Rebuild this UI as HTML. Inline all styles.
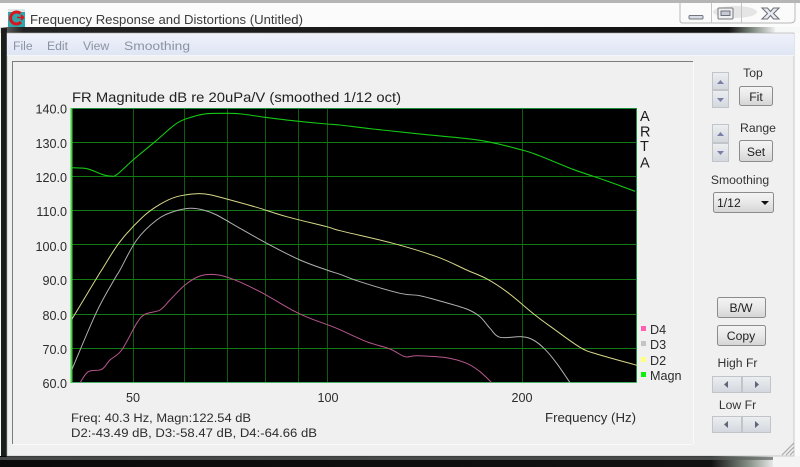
<!DOCTYPE html>
<html><head><meta charset="utf-8">
<style>
html,body{margin:0;padding:0;background:#fff}
svg{display:block;filter:blur(.3px)}
text{font-family:"Liberation Sans",sans-serif}
</style></head><body>
<svg width="800" height="467" viewBox="0 0 800 467" xmlns="http://www.w3.org/2000/svg">
<defs>
<linearGradient id="dk" x1="0" x2="1" y1="0" y2="0"><stop offset="0" stop-color="#0a0a0a"/><stop offset=".92" stop-color="#111"/><stop offset=".97" stop-color="#8a948a"/><stop offset="1" stop-color="#e8e8e8"/></linearGradient>
<linearGradient id="top" x1="0" x2="1" y1="0" y2="0"><stop offset="0" stop-color="#e8e8e8"/><stop offset=".01" stop-color="#555"/><stop offset=".03" stop-color="#222"/><stop offset=".94" stop-color="#111"/><stop offset=".97" stop-color="#7d867d"/><stop offset="1" stop-color="#eee"/></linearGradient>
<linearGradient id="mn" x1="0" x2="0" y1="0" y2="1"><stop offset="0" stop-color="#eef1fa"/><stop offset="1" stop-color="#dfe5f4"/></linearGradient>
<linearGradient id="btn" x1="0" x2="0" y1="0" y2="1"><stop offset="0" stop-color="#f4f4f4"/><stop offset=".5" stop-color="#e8e8e8"/><stop offset="1" stop-color="#d4d4d4"/></linearGradient>
<linearGradient id="spin" x1="0" x2="0" y1="0" y2="1"><stop offset="0" stop-color="#eceef0"/><stop offset="1" stop-color="#d3d7de"/></linearGradient>
</defs>
<rect width="800" height="467" fill="#f7f8f8"/>
<rect width="800" height="3" fill="#b5b5b5"/>
<rect y="3" width="800" height="24" fill="#fbfbfb"/>
<!-- dark frame -->
<rect x="0" y="27" width="775" height="6" fill="url(#top)"/>
<rect x="1" y="28" width="6" height="439" fill="#1a1f1c"/>
<rect x="0" y="456" width="773" height="11" fill="url(#dk)"/>
<rect x="0" y="457" width="773" height="3" fill="#5d625f" opacity=".7"/>
<rect x="773" y="456" width="27" height="11" fill="#f4f4f4"/>
<rect x="794" y="33" width="6" height="423" fill="#fafafa"/>
<!-- client -->
<rect x="7" y="33" width="787" height="423" fill="#f0f0f0" stroke="#a8adb0" stroke-width=".6"/>
<rect x="7" y="34" width="787" height="21" fill="url(#mn)"/>
<rect x="7" y="55" width="787" height="1" fill="#f4f5f8"/>
<!-- groupbox -->
<path d="M12.5 444V61.5H693" fill="none" stroke="#7c7c7c" stroke-width="1"/>
<path d="M693.5 62V444M13 444.5H693" fill="none" stroke="#fafafa" stroke-width="1"/>
<!-- icon -->
<rect x="8" y="9" width="17" height="18" fill="#2fa6a8"/>
<rect x="8" y="9" width="17" height="3" fill="#d8e8e8"/>
<path d="M20.5 13.5A6 6 0 1 0 21 22" fill="none" stroke="#d8141e" stroke-width="3"/>
<path d="M17 17.5H23M21 15L23.5 17.5L21 20" fill="none" stroke="#d8141e" stroke-width="1.6"/>
<!-- title -->
<text x="30" y="24" font-size="12.8" fill="#3c3c3c" textLength="273" lengthAdjust="spacingAndGlyphs">Frequency Response and Distortions (Untitled)</text>
<!-- caption buttons -->
<path d="M680 3V20.5Q680 23 683 23H790Q795 23 795 19V3" fill="none" stroke="#b8b8b8"/>
<path d="M711.5 3V23M741.5 3V23" stroke="#c4c4c4"/>
<ellipse cx="735" cy="12" rx="22" ry="6" fill="#c9c9c9" opacity=".45"/>
<rect x="689" y="15.5" width="14" height="3.5" rx="1" fill="#d8dce6" stroke="#72767e" stroke-width="1"/>
<rect x="718" y="8" width="15" height="11" rx="1" fill="#eef0f4" stroke="#777" stroke-width="1"/>
<rect x="721" y="11" width="9" height="4.5" fill="#c6cad6" stroke="#6d7078" stroke-width="1"/>
<path d="M762 8H767.5L770.5 11.5L773.5 8H779L773.5 13.5L779 19H773.5L770.5 15.5L767.5 19H762L767.5 13.5Z" fill="#e8ebf2" stroke="#6f7278" stroke-width="1.1"/>
<!-- menu -->
<g font-size="12.2" fill="#8b92a2">
<text x="13" y="50">File</text>
<text x="47" y="50">Edit</text>
<text x="83" y="50">View</text>
<text x="124" y="50" textLength="66" lengthAdjust="spacingAndGlyphs">Smoothing</text>
</g>
<!-- title of plot -->
<text x="72" y="102" font-size="14" fill="#222" textLength="329" lengthAdjust="spacingAndGlyphs">FR Magnitude dB re 20uPa/V (smoothed 1/12 oct)</text>
<!-- plot -->
<rect x="72" y="108" width="564" height="275" fill="#000"/>
<g stroke="#0f5c0f" stroke-width="1" fill="none">
<path d="M133.5 108V382M184.5 108V382M227.5 108V382M265.5 108V382M298.5 108V382M327.5 108V382M522.5 108V382"/>
</g>
<g stroke="#127a12" stroke-width="1" fill="none">
<path d="M72 142.5H636M72 176.5H636M72 210.5H636M72 244.5H636M72 279.5H636M72 314.5H636M72 348.5H636"/>
</g>
<path d="M72 108.5H636.5V382.5" fill="none" stroke="#1e8a3c" stroke-width="1"/>
<path d="M72 382.5H636.5" fill="none" stroke="#49b06a" stroke-width="1"/>
<path d="M71.5 108V383" fill="none" stroke="#3fd13f" stroke-width="2"/>
<!-- curves -->
<g id="curves" fill="none" stroke-linejoin="round">
<polyline stroke="#14c814" stroke-width="1.1" points="72,167.7 85,168.3 93,170.7 103,174.7 110,176 116.7,174.7 133,160 155,141.7 176.7,123.3 193,116.7 206.7,113.7 226.7,113.3 241.7,114 265,117.3 293,120.7 326.7,124 340,125 373,129 423,134.3 480,140.3 522,150 540,156 573,169.3 607,181 635,191.3"/>
<polyline stroke="#d8d88a" stroke-width="1" points="72,319 96.7,278 101.7,270 120,241.7 143,216.7 160,204.3 176.7,196.7 196.7,193.7 210,194.7 226.7,199 256.7,207.3 286.7,216.7 326.7,226.7 340,230.7 393,243.3 436.7,256.7 466.7,270 486.7,278.8 506.7,291.7 535,315 553,328.3 580,347.3 596.7,354 633.3,364.3 636,365"/>
<polyline stroke="#b0b0b0" stroke-width="1" points="72,369.3 96.7,311.7 115,278.3 120,270 136.7,240 156.7,220 173.3,211.7 190,208.3 203.3,210 216.7,215 240,228.3 266.7,243.3 300,260 326.7,270 340,274.3 360,281.7 400,293.3 420,295.7 440,301 466.7,309 480,316.7 490,328.3 500,337.3 521.7,336.7 533.3,340 545,349.3 556.7,363.3 570,382.7"/>
<polyline stroke="#b8578f" stroke-width="1" points="80,382.7 88.3,371.7 101.7,369.3 110,360 121.7,350 136.7,323.3 145,314.3 160,310 170,300 185,285 200,276 216.7,274.7 233.3,279.3 260,291.7 293.3,310.7 310,318.3 336.7,328.3 366.7,341.7 390,349 405,356.7 416.7,355.7 446.7,357.7 466.7,363.3 480,371.7 491.7,382.7"/>
</g>
<!-- y labels -->
<g font-size="12.6" fill="#2c2c2c" text-anchor="end">
<text x="67" y="113.5">140.0</text>
<text x="67" y="148">130.0</text>
<text x="67" y="182">120.0</text>
<text x="67" y="216">110.0</text>
<text x="67" y="251">100.0</text>
<text x="67" y="285">90.0</text>
<text x="67" y="320">80.0</text>
<text x="67" y="354">70.0</text>
<text x="67" y="388">60.0</text>
</g>
<!-- x labels -->
<g font-size="12.6" fill="#2c2c2c" text-anchor="middle">
<text x="133" y="402">50</text>
<text x="328" y="402">100</text>
<text x="522" y="402">200</text>
</g>
<text x="545" y="422" font-size="12.6" fill="#2c2c2c" textLength="91" lengthAdjust="spacingAndGlyphs">Frequency (Hz)</text>
<text x="71" y="422" font-size="12.2" fill="#2c2c2c" textLength="180" lengthAdjust="spacingAndGlyphs">Freq: 40.3 Hz, Magn:122.54 dB</text>
<text x="71" y="437" font-size="12.2" fill="#2c2c2c" textLength="246" lengthAdjust="spacingAndGlyphs">D2:-43.49 dB, D3:-58.47 dB, D4:-64.66 dB</text>
<!-- ARTA -->
<g font-size="14.5" fill="#1c1c1c">
<text x="640" y="121">A</text>
<text x="640" y="136.5">R</text>
<text x="640" y="151">T</text>
<text x="640" y="167.5">A</text>
</g>
<!-- legend -->
<rect x="641" y="326" width="5" height="5" fill="#ff5fb4"/>
<rect x="641" y="341" width="5" height="5" fill="#c4c4c4"/>
<rect x="641" y="357" width="5" height="5" fill="#ffff80"/>
<rect x="641" y="372" width="5" height="5" fill="#0cf00c"/>
<g font-size="12.6" fill="#2c2c2c">
<text x="650" y="334">D4</text>
<text x="650" y="349">D3</text>
<text x="650" y="365">D2</text>
<text x="650" y="380">Magn</text>
</g>
<!-- right panel labels -->
<g font-size="12.2" fill="#333" text-anchor="middle">
<text x="753" y="77">Top</text>
<text x="758" y="132">Range</text>
<text x="740" y="184">Smoothing</text>
<text x="737.5" y="367">High Fr</text>
<text x="737.5" y="409">Low Fr</text>
</g>
<!-- spin buttons -->
<g stroke="#c2c5c8" fill="url(#spin)">
<rect x="712.5" y="72.5" width="16" height="17"/>
<rect x="712.5" y="90.5" width="16" height="17"/>
<rect x="712.5" y="124.5" width="16" height="18"/>
<rect x="712.5" y="143.5" width="16" height="18"/>
</g>
<g fill="#7a7fa8">
<path d="M717 84L720.5 80L724 84Z"/><path d="M717 98L720.5 102L724 98Z"/>
<path d="M717 136L720.5 132L724 136Z"/><path d="M717 151L720.5 155L724 151Z"/>
</g>
<!-- push buttons -->
<g stroke="#8c8c8c" fill="url(#btn)">
<rect x="739.5" y="86.5" width="33" height="19" rx="2"/>
<rect x="739.5" y="140.5" width="33" height="21" rx="2"/>
<rect x="717.5" y="297.5" width="48" height="20" rx="2"/>
<rect x="717.5" y="325.5" width="48" height="20" rx="2"/>
</g>
<g font-size="12.2" fill="#222" text-anchor="middle">
<text x="756" y="101">Fit</text>
<text x="756" y="156">Set</text>
<text x="741" y="312">B/W</text>
<text x="741" y="340">Copy</text>
</g>
<!-- combo -->
<rect x="713.5" y="192.5" width="60" height="20" rx="2" fill="url(#btn)" stroke="#8c8c8c"/>
<text x="717" y="207" font-size="12.2" fill="#222">1/12</text>
<path d="M761 201H769L765 205Z" fill="#111"/>
<!-- horizontal spin -->
<g stroke="#c2c5c8" fill="url(#spin)">
<rect x="712.5" y="376.5" width="29" height="16"/>
<rect x="742.5" y="376.5" width="28" height="16"/>
<rect x="712.5" y="416.5" width="29" height="16"/>
<rect x="742.5" y="416.5" width="28" height="16"/>
</g>
<g fill="#5f6478">
<path d="M728 381L724 384.5L728 388Z"/><path d="M755 381L759 384.5L755 388Z"/>
<path d="M728 421L724 424.5L728 428Z"/><path d="M755 421L759 424.5L755 428Z"/>
</g>
<!-- grip -->
<path d="M782 455L794 443M786 455L794 447M790 455L794 451" stroke="#a8a8a8" stroke-width="1.2"/>
</svg>
<script>
document.querySelectorAll('#curves polyline').forEach(function(l){
  var p=l.getAttribute('points').trim().split(/\s+/).map(function(s){return s.split(',').map(Number)});
  var d='M'+p[0][0]+' '+p[0][1];
  for(var i=0;i<p.length-1;i++){
    var a=p[Math.max(i-1,0)],b=p[i],c=p[i+1],e=p[Math.min(i+2,p.length-1)];
    d+='C'+(b[0]+(c[0]-a[0])/6).toFixed(1)+' '+(b[1]+(c[1]-a[1])/6).toFixed(1)+' '+(c[0]-(e[0]-b[0])/6).toFixed(1)+' '+(c[1]-(e[1]-b[1])/6).toFixed(1)+' '+c[0]+' '+c[1];
  }
  var n=document.createElementNS('http://www.w3.org/2000/svg','path');
  n.setAttribute('d',d);n.setAttribute('stroke',l.getAttribute('stroke'));n.setAttribute('stroke-width',l.getAttribute('stroke-width'));
  l.parentNode.replaceChild(n,l);
});
</script>
</body></html>
